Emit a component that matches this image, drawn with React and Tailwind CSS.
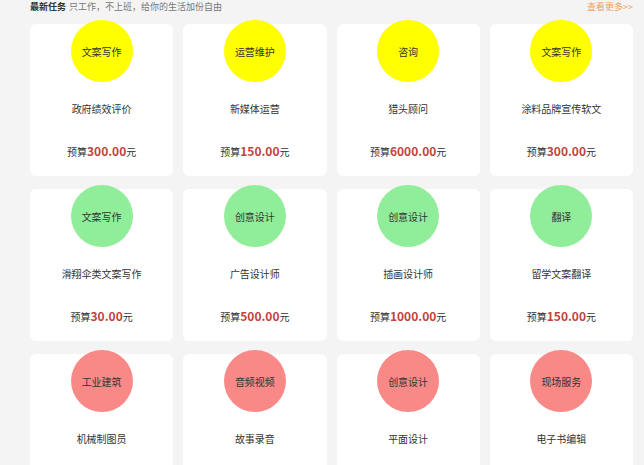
import React from 'react';

const tasks = [
  { tag: '文案写作', title: '政府绩效评价', budget: '300.00', color: 'bg-[#ffff00]' },
  { tag: '运营维护', title: '新媒体运营', budget: '150.00', color: 'bg-[#ffff00]' },
  { tag: '咨询', title: '猎头顾问', budget: '6000.00', color: 'bg-[#ffff00]' },
  { tag: '文案写作', title: '涂料品牌宣传软文', budget: '300.00', color: 'bg-[#ffff00]' },
  { tag: '文案写作', title: '滑翔伞类文案写作', budget: '30.00', color: 'bg-[#90ee9a]' },
  { tag: '创意设计', title: '广告设计师', budget: '500.00', color: 'bg-[#90ee9a]' },
  { tag: '创意设计', title: '插画设计师', budget: '1000.00', color: 'bg-[#90ee9a]' },
  { tag: '翻译', title: '留学文案翻译', budget: '150.00', color: 'bg-[#90ee9a]' },
  { tag: '工业建筑', title: '机械制图员', budget: '200.00', color: 'bg-[#f98987]' },
  { tag: '音频视频', title: '故事录音', budget: '100.00', color: 'bg-[#f98987]' },
  { tag: '创意设计', title: '平面设计', budget: '300.00', color: 'bg-[#f98987]' },
  { tag: '现场服务', title: '电子书编辑', budget: '200.00', color: 'bg-[#f98987]' },
];

const TaskCard = ({ tag, title, budget, color }) => (
  <div className="h-[152px] bg-white rounded-[6px] flex flex-col items-center">
    <div className={`-mt-[4px] w-[62px] h-[62px] rounded-full ${color} flex items-center justify-center text-[10px] text-[#333]`}>
      {tag}
    </div>
    <p className="mt-[20px] h-[14px] leading-[14px] text-[10px] text-[#333]">{title}</p>
    <p className="mt-[27px] h-[16px] leading-[16px] text-[10px] text-[#333]">
      预算<span className="text-[12px] font-bold text-[#c0433c]">{budget}</span>元
    </p>
  </div>
);

export default function App() {
  return (
    <div className="w-[644px] h-[465px] overflow-hidden bg-[#f4f4f4] pl-[30px] pr-[11px] font-['Noto_Sans_CJK_SC',sans-serif]">
      <div className="h-[14px] flex items-center justify-between">
        <div className="flex items-baseline gap-[3px]">
          <span className="text-[9px] font-bold text-[#333]">最新任务</span>
          <span className="text-[9px] text-[#777]">只工作，不上班，给你的生活加份自由</span>
        </div>
        <span className="text-[9px] text-[#f0a05a]">查看更多&gt;&gt;</span>
      </div>
      <div className="mt-[10px] grid grid-cols-4 gap-x-[10px] gap-y-[13px]">
        {tasks.map((t, i) => (
          <TaskCard key={i} {...t} />
        ))}
      </div>
    </div>
  );
}
